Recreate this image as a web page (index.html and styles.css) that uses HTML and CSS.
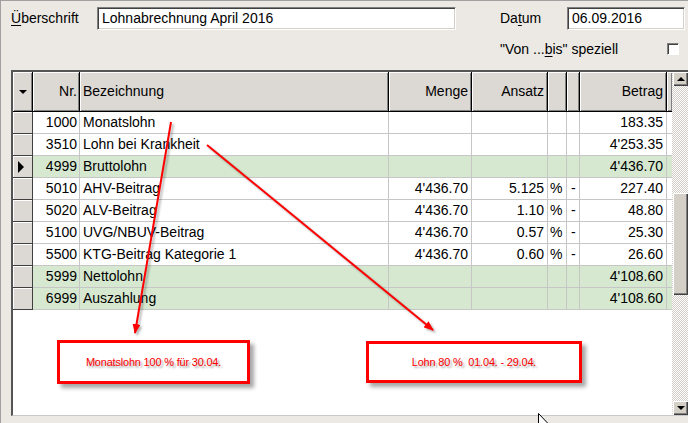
FILE: index.html
```html
<!DOCTYPE html>
<html lang="de">
<head>
    <meta charset="UTF-8">
    <title>Lohnabrechnung</title>
    <link rel="stylesheet" href="styles.css">
</head>
<body>
    <div class="window">
        <!-- Kopfbereich -->
        <div class="head">
            <div class="label"><u>Ü</u>berschrift</div>
            <div class="field">Lohnabrechnung April 2016</div>
            <div></div>
            <div class="label">Da<u>t</u>um</div>
            <div class="field">06.09.2016</div>
            <div class="label special">"Von ...<u>b</u>is" speziell</div>
            <div class="check"></div>
        </div>

        <!-- Tabelle -->
        <div class="grid">
            <div class="table">
                <div class="row hd">
                    <div class="cell ind"><span class="tri-down"></span></div>
                    <div class="cell r">Nr.</div>
                    <div class="cell">Bezeichnung</div>
                    <div class="cell r">Menge</div>
                    <div class="cell r">Ansatz</div>
                    <div class="cell"></div>
                    <div class="cell"></div>
                    <div class="cell r">Betrag</div>
                    <div class="cell"></div>
                </div>
                <div class="row">
                    <div class="cell ind"></div><div class="cell r">1000</div><div class="cell">Monatslohn</div>
                    <div class="cell r"></div><div class="cell r"></div><div class="cell pct"></div><div class="cell dash"></div>
                    <div class="cell r">183.35</div><div class="cell"></div>
                </div>
                <div class="row">
                    <div class="cell ind"></div><div class="cell r">3510</div><div class="cell">Lohn bei Krankheit</div>
                    <div class="cell r"></div><div class="cell r"></div><div class="cell pct"></div><div class="cell dash"></div>
                    <div class="cell r">4'253.35</div><div class="cell"></div>
                </div>
                <div class="row sum">
                    <div class="cell ind"><span class="tri-right"></span></div><div class="cell r">4999</div><div class="cell">Bruttolohn</div>
                    <div class="cell r"></div><div class="cell r"></div><div class="cell pct"></div><div class="cell dash"></div>
                    <div class="cell r">4'436.70</div><div class="cell"></div>
                </div>
                <div class="row">
                    <div class="cell ind"></div><div class="cell r">5010</div><div class="cell">AHV-Beitrag</div>
                    <div class="cell r">4'436.70</div><div class="cell r">5.125</div><div class="cell pct">%</div><div class="cell dash">-</div>
                    <div class="cell r">227.40</div><div class="cell"></div>
                </div>
                <div class="row">
                    <div class="cell ind"></div><div class="cell r">5020</div><div class="cell">ALV-Beitrag</div>
                    <div class="cell r">4'436.70</div><div class="cell r">1.10</div><div class="cell pct">%</div><div class="cell dash">-</div>
                    <div class="cell r">48.80</div><div class="cell"></div>
                </div>
                <div class="row">
                    <div class="cell ind"></div><div class="cell r">5100</div><div class="cell">UVG/NBUV-Beitrag</div>
                    <div class="cell r">4'436.70</div><div class="cell r">0.57</div><div class="cell pct">%</div><div class="cell dash">-</div>
                    <div class="cell r">25.30</div><div class="cell"></div>
                </div>
                <div class="row">
                    <div class="cell ind"></div><div class="cell r">5500</div><div class="cell">KTG-Beitrag Kategorie 1</div>
                    <div class="cell r">4'436.70</div><div class="cell r">0.60</div><div class="cell pct">%</div><div class="cell dash">-</div>
                    <div class="cell r">26.60</div><div class="cell"></div>
                </div>
                <div class="row sum">
                    <div class="cell ind"></div><div class="cell r">5999</div><div class="cell">Nettolohn</div>
                    <div class="cell r"></div><div class="cell r"></div><div class="cell pct"></div><div class="cell dash"></div>
                    <div class="cell r">4'108.60</div><div class="cell"></div>
                </div>
                <div class="row sum">
                    <div class="cell ind"></div><div class="cell r">6999</div><div class="cell">Auszahlung</div>
                    <div class="cell r"></div><div class="cell r"></div><div class="cell pct"></div><div class="cell dash"></div>
                    <div class="cell r">4'108.60</div><div class="cell"></div>
                </div>
            </div>
            <div class="scroll">
                <div class="sbtn"><span class="tri-up"></span></div>
                <div class="track"><div class="thumb"></div></div>
                <div class="sbtn"><span class="tri-down"></span></div>
            </div>
        </div>

        <!-- Anmerkungen -->
        <svg class="arrows" width="688" height="423" viewBox="0 0 688 423">
            <defs>
                <marker id="head" markerWidth="10" markerHeight="8" refX="9" refY="4" orient="auto" markerUnits="userSpaceOnUse">
                    <path d="M0 0 L10 4 L0 8 Z" fill="#ff0000"/>
                </marker>
            </defs>
            <line x1="171" y1="122" x2="135" y2="333" stroke="#ff0000" stroke-width="2" marker-end="url(#head)"/>
            <line x1="207" y1="145" x2="433" y2="330" stroke="#ff0000" stroke-width="2" marker-end="url(#head)"/>
        </svg>
        <div class="note note-1">Monatslohn 100 % für 30.04.</div>
        <div class="note note-2">Lohn 80 %&nbsp; 01.04. - 29.04.</div>
        <svg class="cursor" width="12" height="18" viewBox="0 0 12 18">
            <path d="M0.5 0.5 L0.5 14 L3.5 11 L6 16.5 L8 15.5 L5.5 10.5 L10 10.5 Z" fill="#fff" stroke="#000" stroke-width="1"/>
        </svg>
    </div>
</body>
</html>
```

FILE: styles.css
```css
body {
    margin: 0;
    font-family: "Liberation Sans", Arial, sans-serif;
    font-size: 14px;
    color: #000;
}
.window {
    position: relative;
    width: 688px;
    height: 423px;
    background-color: #ece9e4;
    border-top: 1px solid #a0a0a0;
    border-left: 1px solid #a0a0a0;
    box-sizing: border-box;
    overflow: hidden;
}
.head {
    display: grid;
    grid-template-columns: 86px 359px 44px 67px 118px;
    grid-template-rows: 23px 14px;
    row-gap: 12px;
    padding: 6px 0 0 10px;
    height: 69px;
    box-sizing: border-box;
}
.label {
    line-height: 23px;
    white-space: nowrap;
}
.label u {
    text-decoration-thickness: 1px;
    text-underline-offset: 2px;
}
.special {
    grid-column: 4 / 6;
    grid-row: 2;
    line-height: 14px;
}
.field {
    background-color: #fff;
    border: 1px solid;
    border-color: #808080 #fff #fff #808080;
    box-shadow: inset 1px 1px #404040, inset -1px -1px #d4d0c8;
    padding-left: 4px;
    line-height: 21px;
    white-space: nowrap;
    overflow: hidden;
}
.check {
    grid-column: 4 / 6;
    grid-row: 2;
    justify-self: end;
    align-self: center;
    width: 12px;
    height: 12px;
    margin-right: 6px;
    box-sizing: border-box;
    background-color: #fff;
    border: 1px solid;
    border-color: #808080 #fff #fff #808080;
    box-shadow: inset 1px 1px #404040;
}
.grid {
    display: flex;
    margin-left: 10px;
    height: 346px;
    border-top: 2px solid #555;
    border-left: 2px solid #555;
    border-bottom: 1px solid #c8c8c8;
    box-sizing: border-box;
    background-color: #fff;
}
.table {
    width: 659px;
    flex: none;
}
.row {
    display: grid;
    grid-template-columns: 20px 47px 309px 83px 76px 19px 13px 87px 5px;
    height: 22px;
}
.cell {
    box-sizing: border-box;
    border-right: 1px solid #c6c6c6;
    border-bottom: 1px solid #c6c6c6;
    padding: 0 2px 0 3px;
    line-height: 21px;
    white-space: nowrap;
    overflow: hidden;
}
.r {
    text-align: right;
    padding-right: 3px;
}
.row .cell:nth-child(2) {
    padding-right: 2px;
}
.pct {
    padding-left: 2px;
}
.dash {
    padding-left: 4px;
}
.sum .cell {
    background-color: #d6e9d0;
}
.row .ind {
    background-color: #dcd8d3;
    border-right: 1px solid #404040;
    border-bottom: 1px solid #404040;
    box-shadow: inset 1px 1px #fff;
    display: flex;
    align-items: center;
    padding: 0 0 0 5px;
}
.hd {
    height: 40px;
}
.hd .cell {
    background-color: #dcd8d3;
    border-right: 1px solid #000;
    border-bottom: 1px solid #000;
    box-shadow: inset 1px 1px #fff, inset -1px -1px #808080;
    line-height: 39px;
}
.hd .ind {
    justify-content: center;
    padding: 0;
}
.tri-down {
    width: 0;
    height: 0;
    border-left: 4px solid transparent;
    border-right: 4px solid transparent;
    border-top: 4px solid #000;
}
.tri-up {
    width: 0;
    height: 0;
    border-left: 4px solid transparent;
    border-right: 4px solid transparent;
    border-bottom: 4px solid #000;
}
.tri-right {
    width: 0;
    height: 0;
    border-top: 6px solid transparent;
    border-bottom: 6px solid transparent;
    border-left: 6px solid #000;
}
.scroll {
    width: 16px;
    flex: none;
    display: flex;
    flex-direction: column;
    background: repeating-conic-gradient(#d4d0c8 0 25%, #fff 0 50%) 0 0 / 2px 2px;
}
.sbtn {
    height: 14px;
    margin-left: 1px;
    background-color: #d4d0c8;
    box-shadow: inset 1px 1px #fff, inset -1px -1px #404040, inset -2px -2px #808080;
    display: flex;
    align-items: center;
    justify-content: center;
}
.track {
    flex: 1;
}
.thumb {
    margin: 107px 0 0 1px;
    height: 102px;
    background-color: #d4d0c8;
    box-shadow: inset 1px 1px #fff, inset -1px -1px #404040, inset -2px -2px #808080;
}
.arrows {
    position: absolute;
    left: -1px;
    top: -1px;
    pointer-events: none;
    filter: drop-shadow(2px 2px 1px rgba(0, 0, 0, 0.3));
}
.note {
    position: absolute;
    box-sizing: border-box;
    border: 3px solid #ff0000;
    background-color: #fff;
    box-shadow: 4px 4px 4px rgba(0, 0, 0, 0.35);
    color: #ff0000;
    font-size: 11px;
    letter-spacing: -0.2px;
    text-shadow: 2px 2px 2px rgba(0, 0, 0, 0.35);
    display: flex;
    align-items: center;
    justify-content: center;
    white-space: nowrap;
}
.note-1 {
    left: 56px;
    top: 339px;
    width: 193px;
    height: 44px;
}
.note-2 {
    left: 365px;
    top: 340px;
    width: 216px;
    height: 42px;
}
.cursor {
    position: absolute;
    left: 537px;
    top: 412px;
}
```
